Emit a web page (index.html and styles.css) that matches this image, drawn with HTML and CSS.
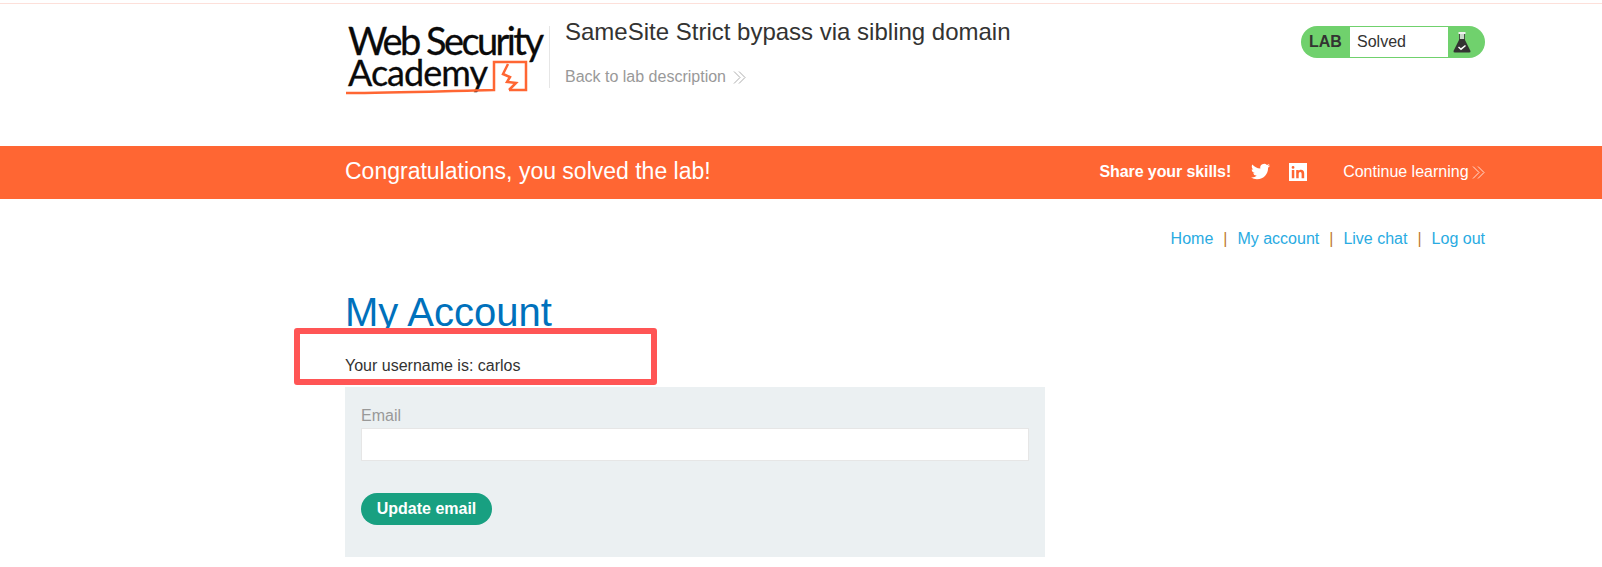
FILE: index.html
```html
<!DOCTYPE html>
<html lang="en">
<head>
  <meta charset="UTF-8" />
  <meta name="viewport" content="width=device-width, initial-scale=1.0"/>
  <title>SameSite Strict bypass via sibling domain</title>
  <link rel="stylesheet" href="styles.css">
</head>
<body>

  <div class="top-rule"></div>

  <header class="lab-header">
    <div class="lab-intro">
      <svg class="logo" viewBox="0 0 200 72" aria-label="Web Security Academy">
        <text class="logo-text" x="3" y="29" font-size="38" textLength="196" lengthAdjust="spacing">Web Security</text>
        <text class="logo-text" x="3" y="60" font-size="36" textLength="140" lengthAdjust="spacing">Academy</text>
        <path class="logo-mark" d="M1 67 C50 67 100 65 149 64 L149 36 L181 36 L181 64 L164 64"/>
        <path class="logo-mark" d="M163 38 L158 48 L165 51 L162 56 L171 57 L164 64"/>
      </svg>
      <div class="lab-title">
        <h2>SameSite Strict bypass via sibling domain</h2>
        <a class="back-link" href="#">Back to lab description
          <svg class="chevrons" viewBox="0 0 13 13"><path d="M1 .5 L7 6.500 L1 12.500 M6 .5 L12 6.500 L6 12.500"/></svg>
        </a>
      </div>
    </div>
    <div class="lab-status">
      <span class="lab-label">LAB</span>
      <span class="lab-state">Solved</span>
      <svg class="flask" viewBox="0 0 18 21">
        <path class="flask-neck" d="M6.500 1.500 H11.500 V8 H6.500 Z"/>
        <path class="flask-lid" d="M5.500 0 H12.500 V2 H5.500 Z"/>
        <path class="flask-body" d="M6.500 7 H11.500 L17.500 19 Q17.800 20.500 16 20.500 H2 Q.2 20.500 .5 19 Z"/>
        <path class="flask-tick" d="M5.500 15 L8 17.200 L12.500 13.500"/>
      </svg>
    </div>
  </header>

  <section class="solved-banner">
    <h4>Congratulations, you solved the lab!</h4>
    <div class="banner-actions">
      <span class="share-text">Share your skills!</span>
      <svg class="twitter" viewBox="0 0 24 24"><path d="M23.950 4.570a10 10 0 0 1-2.820.770 4.960 4.960 0 0 0 2.160-2.720c-.950.550-2 .950-3.130 1.180a4.920 4.920 0 0 0-8.380 4.480C7.690 8.100 4.070 6.130 1.640 3.160a4.820 4.820 0 0 0-.670 2.480c0 1.710.870 3.210 2.190 4.100a4.900 4.900 0 0 1-2.230-.620v.060a4.920 4.920 0 0 0 3.950 4.830 4.940 4.940 0 0 1-2.210.080 4.940 4.940 0 0 0 4.600 3.420A9.870 9.870 0 0 1 0 19.540a14 14 0 0 0 7.560 2.210c9.050 0 14-7.500 14-13.980 0-.210 0-.420-.020-.630a9.940 9.940 0 0 0 2.460-2.550z"/></svg>
      <svg class="linkedin" viewBox="0 0 18 18"><path fill-rule="evenodd" d="M0 0 H18 V18 H0 Z M2.800 7 V15.200 H5.300 V7 Z M4.050 3 A1.400 1.400 0 1 0 4.050 5.800 A1.400 1.400 0 1 0 4.050 3 Z M7.200 7 V15.200 H9.700 V11 C9.700 9.700 10.200 9 11.200 9 C12.200 9 12.600 9.700 12.600 11 V15.200 H15.200 V10.500 C15.200 8 14 6.800 12.100 6.800 C10.900 6.800 10.100 7.300 9.700 8 V7 Z"/></svg>
      <a class="continue-link" href="#">Continue learning
        <svg class="chevrons" viewBox="0 0 13 13"><path d="M1 .5 L7 6.500 L1 12.500 M6 .5 L12 6.500 L6 12.500"/></svg>
      </a>
    </div>
  </section>

  <main class="page-body">
    <nav class="top-links">
      <a href="#">Home</a><span class="sep">|</span><a href="#">My account</a><span class="sep">|</span><a href="#">Live chat</a><span class="sep">|</span><a href="#">Log out</a>
    </nav>

    <h1>My Account</h1>
    <p class="username">Your username is: carlos</p>

    <form class="email-form">
      <label for="email">Email</label>
      <input id="email" type="email">
      <button class="update-btn" type="button">Update email</button>
    </form>
  </main>

  <div class="highlight-box"></div>

</body>
</html>
```

FILE: styles.css
```css
/* Base */
* {
  margin: 0;
  padding: 0;
  box-sizing: border-box;
}

body {
  font-family: "Liberation Sans", Arial, sans-serif;
  font-size: 16px;
  color: #333332;
  background: #fff;
  height: 567px;
  overflow: hidden;
  position: relative;
}

a {
  text-decoration: none;
}

.top-rule {
  margin-top: 3px;
  height: 1px;
  background: #fde0da;
}

/* Lab header */
.lab-header {
  height: 142px;
  padding: 22px 117px 0 345px;
  display: flex;
  justify-content: space-between;
  align-items: flex-start;
}

.lab-intro {
  display: flex;
  align-items: flex-start;
}

.logo {
  width: 200px;
  height: 72px;
  display: block;
  overflow: visible;
}

.logo-text {
  font-family: Lato, "Liberation Sans", sans-serif;
  fill: #0a0a0a;
  stroke: #0a0a0a;
  stroke-width: 0.3;
}

.logo-mark {
  fill: none;
  stroke: #ff6633;
  stroke-width: 2.500;
}

.lab-title {
  margin-left: 4px;
  padding-left: 15px;
  height: 62px;
  border-left: 1px solid #e6e6e6;
}

.lab-title h2 {
  font-size: 24px;
  font-weight: 400;
  line-height: 28px;
  margin-top: -8px;
  color: #333332;
}

.back-link {
  display: block;
  margin-top: 22px;
  line-height: 18px;
  color: #999;
}

.chevrons {
  width: 13px;
  height: 13px;
  margin-left: 3px;
  vertical-align: -2px;
  fill: none;
  stroke: currentColor;
  stroke-width: 1;
  opacity: 0.8;
}

.continue-link .chevrons {
  margin-left: -1px;
}

/* Lab status pill */
.lab-status {
  width: 184px;
  height: 32px;
  background: #70d16d;
  border-radius: 16px;
  display: flex;
  align-items: center;
  padding: 1px 0;
}

.lab-label {
  width: 49px;
  padding-left: 8px;
  font-weight: 700;
}

.lab-state {
  width: 98px;
  height: 30px;
  line-height: 30px;
  padding-left: 7px;
  background: #fff;
}

.flask {
  width: 18px;
  height: 21px;
  margin-left: 5px;
}

.flask-body {
  fill: #333332;
}

.flask-neck {
  fill: #c9d8c9;
  stroke: #333332;
  stroke-width: 0.8;
}

.flask-lid {
  fill: #f0f0f0;
}

.flask-tick {
  fill: none;
  stroke: #fff;
  stroke-width: 1.500;
}

/* Orange banner */
.solved-banner {
  height: 53px;
  padding: 0 117px 2px 345px;
  background: #ff6633;
  color: #fff;
  display: flex;
  justify-content: space-between;
  align-items: center;
}

.solved-banner h4 {
  font-size: 23px;
  font-weight: 400;
}

.banner-actions {
  display: flex;
  align-items: center;
}

.share-text {
  font-weight: 700;
  letter-spacing: -0.1px;
  margin-right: 20px;
}

.twitter {
  width: 19px;
  height: 19px;
  fill: #fff;
  margin-right: 19px;
}

.linkedin {
  width: 18px;
  height: 18px;
  fill: #fff;
  margin-right: 36px;
}

.continue-link {
  color: #fff;
}

/* Page content */
.page-body {
  padding: 31px 117px 0 345px;
}

.top-links {
  display: flex;
  justify-content: flex-end;
  line-height: 18px;
}

.top-links a {
  color: #29abe2;
}

.sep {
  color: #c07a30;
  margin: 0 10px;
}

h1 {
  font-size: 40px;
  font-weight: 400;
  line-height: 46px;
  margin-top: 41px;
  color: #0071bc;
}

.username {
  margin-top: 22px;
  line-height: 18px;
}

.email-form {
  width: 700px;
  height: 170px;
  margin-top: 12px;
  padding: 19px 16px 0;
  background: #ebf0f2;
}

.email-form label {
  display: block;
  line-height: 20px;
  color: #999;
}

.email-form input {
  display: block;
  width: 100%;
  height: 33px;
  margin-top: 2px;
  background: #fff;
  border: 1px solid #e6e6e6;
}

.update-btn {
  display: block;
  margin-top: 32px;
  width: 131px;
  height: 32px;
  border: none;
  border-radius: 16px;
  background: #18a081;
  color: #fff;
  font-family: inherit;
  font-size: 16px;
  font-weight: 700;
}

/* Red annotation drawn over the screenshot */
.highlight-box {
  position: absolute;
  left: 294px;
  top: 328px;
  width: 363px;
  height: 57px;
  border: 6px solid #ff5555;
  border-radius: 3px;
}
```
